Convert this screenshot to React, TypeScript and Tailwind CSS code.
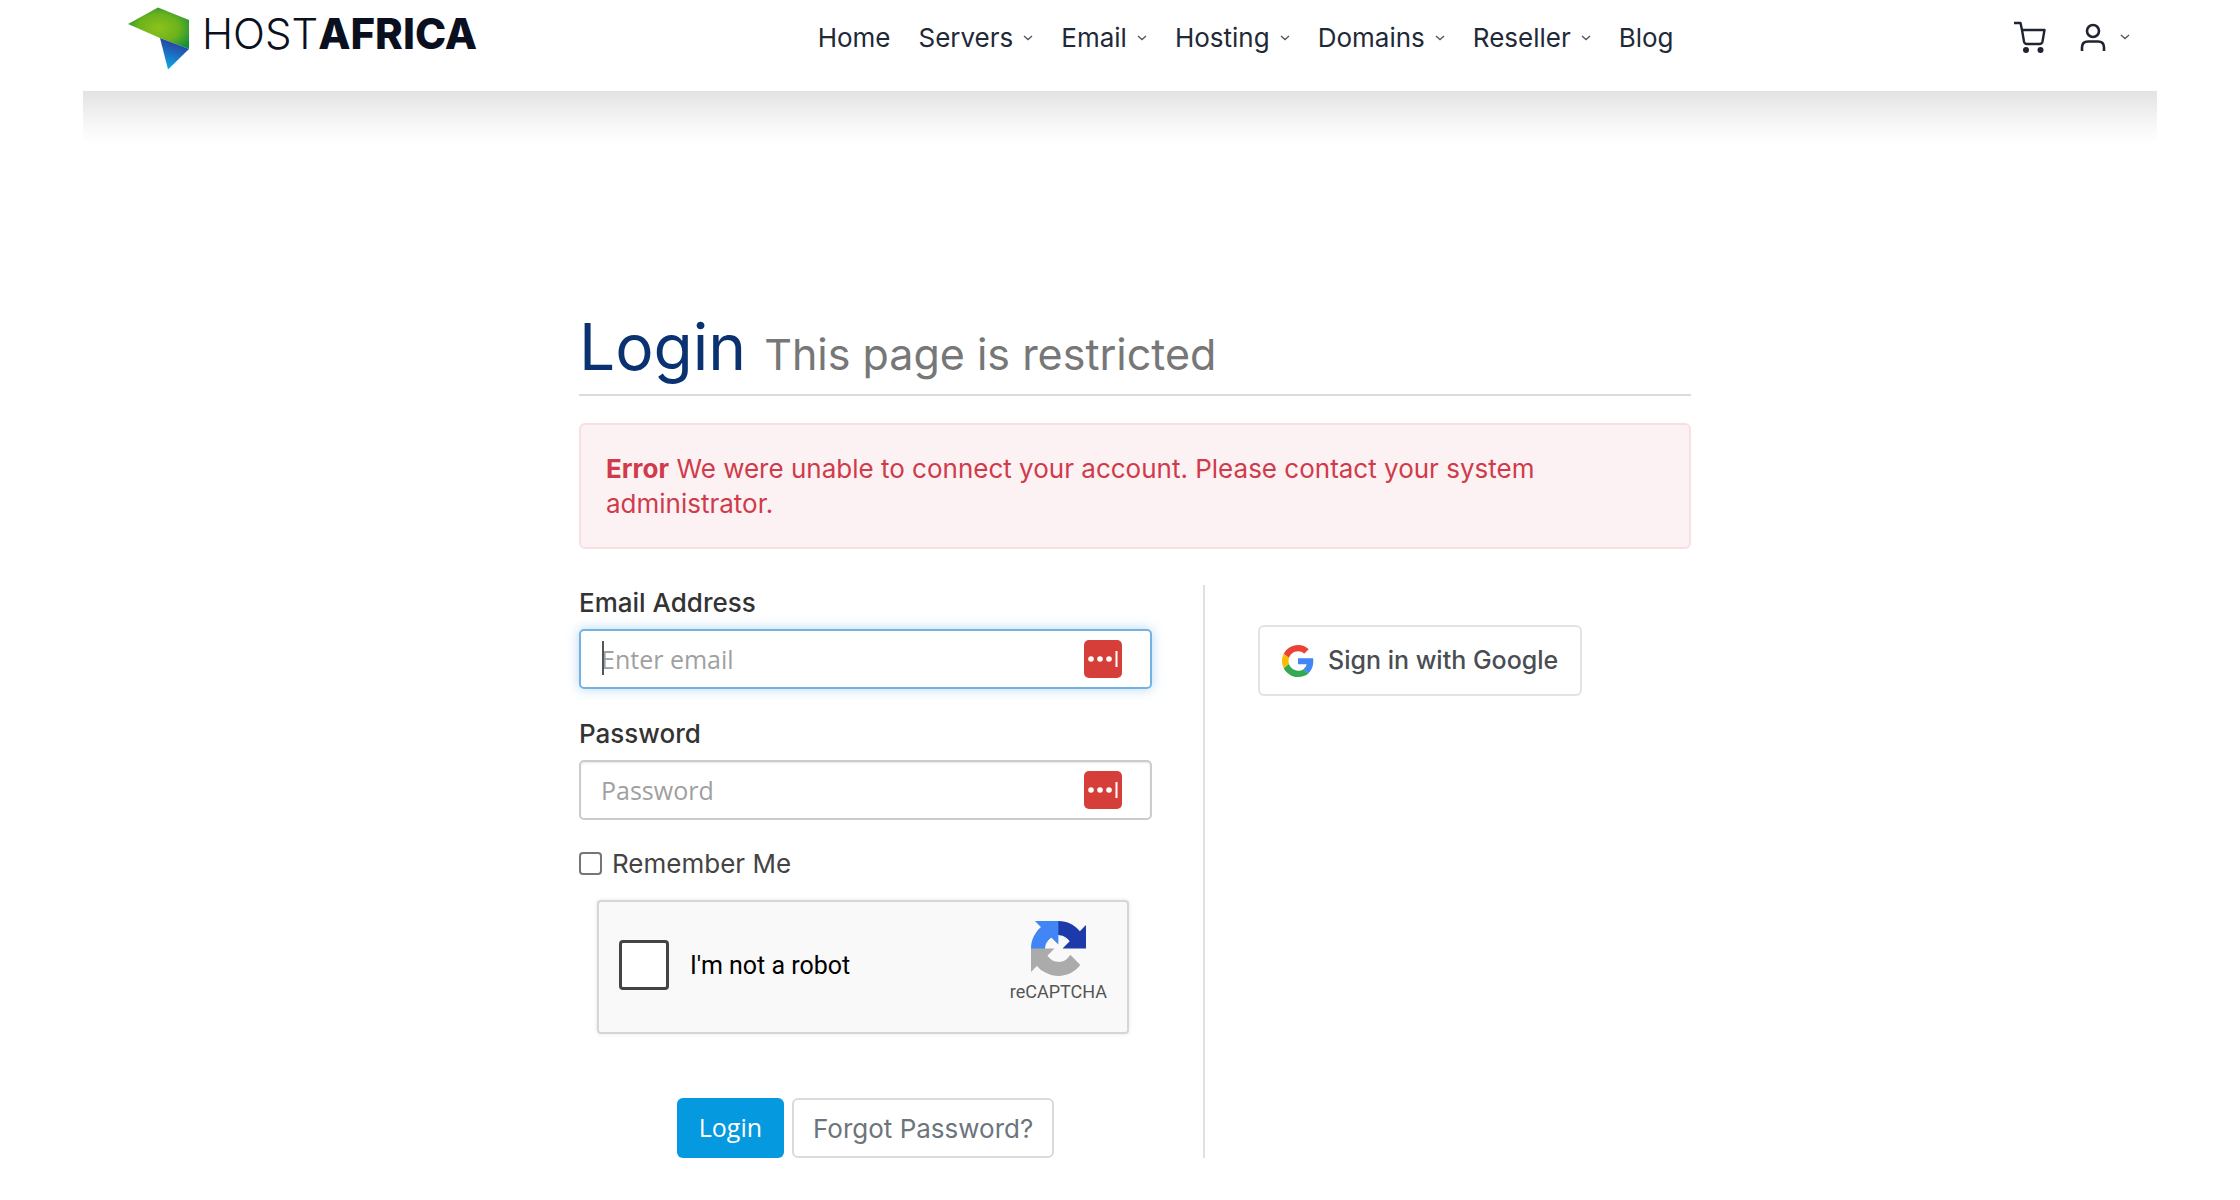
const navItems = [
   { label: "Home", hasMenu: false },
   { label: "Servers", hasMenu: true },
   { label: "Email", hasMenu: true },
   { label: "Hosting", hasMenu: true },
   { label: "Domains", hasMenu: true },
   { label: "Reseller", hasMenu: true },
   { label: "Blog", hasMenu: false },
];

const Chevron = () => (
   <svg width="10" height="6" viewBox="0 0 10 6" fill="none" aria-hidden="true">
      <path d="M1 1L5 4.6L9 1" stroke="#4b5563" strokeWidth="1.3" />
   </svg>
);

const Logo = () => (
   <a href="#" className="flex items-start gap-[13px] text-[#0b1020]">
      <svg width="61" height="63" viewBox="0 0 61 63" aria-hidden="true">
         <defs>
            <radialGradient id="green" cx="0.5" cy="0.5" r="0.6">
               <stop offset="0" stopColor="#8cc21a" />
               <stop offset="0.55" stopColor="#6db31c" />
               <stop offset="1" stopColor="#17903a" />
            </radialGradient>
            <linearGradient id="blue" x1="0.6" y1="0" x2="0.3" y2="1">
               <stop offset="0.1" stopColor="#27409a" />
               <stop offset="0.5" stopColor="#1d6cc0" />
               <stop offset="1" stopColor="#08aee8" />
            </linearGradient>
         </defs>
         <path d="M0 17L30 0.5L61 13V42L32 31Z" fill="url(#green)" />
         <path d="M32 31L61 42L40 62.5Z" fill="url(#blue)" />
      </svg>
      <span className="text-[42px] leading-[54px] font-light">
         HOST<span className="font-extrabold">AFRICA</span>
      </span>
   </a>
);

const Header = () => (
   <header className="flex h-[91px] items-start justify-between pt-[7px] pr-[110px] pl-[128px]">
      <Logo />
      <nav className="flex items-center gap-7 pt-[13px] text-[26px] leading-[35px] text-[#1f2937]">
         {navItems.map((item) => (
            <a key={item.label} href="#" className="flex items-center gap-[10px]">
               {item.label}
               {item.hasMenu && <Chevron />}
            </a>
         ))}
      </nav>
      <div className="flex items-center gap-[34px] pt-[13px]">
         <a href="#" aria-label="Cart">
            <svg width="32" height="34" viewBox="0 0 32 34" fill="none" aria-hidden="true">
               <path
                  d="M0 3H6.5L8 10M8 10H30.5L28.5 21.5Q28 24 25.5 24H13Q10.5 24 10 21.5Z"
                  stroke="#1f2430"
                  strokeWidth="2.4"
                  strokeLinejoin="round"
               />
               <circle cx="12" cy="30" r="3" fill="#1f2430" />
               <circle cx="26.5" cy="30" r="3" fill="#1f2430" />
            </svg>
         </a>
         <button type="button" aria-label="Account" className="flex items-center gap-[14px]">
            <svg width="26" height="34" viewBox="0 0 26 34" fill="none" aria-hidden="true">
               <circle cx="13" cy="11" r="6" stroke="#1f2430" strokeWidth="2.6" />
               <path
                  d="M2 31V27.5Q2 21.5 8 21.5H18Q24 21.5 24 27.5V31"
                  stroke="#1f2430"
                  strokeWidth="2.6"
               />
            </svg>
            <Chevron />
         </button>
      </div>
   </header>
);

// Badge that the password manager puts in each field
const FieldBadge = () => (
   <svg
      className="absolute top-[11px] right-[30px]"
      width="38"
      height="38"
      viewBox="0 0 38 38"
      aria-hidden="true"
   >
      <rect width="38" height="38" rx="5" fill="#d63e3a" />
      <circle cx="7" cy="19" r="2.8" fill="#fff" />
      <circle cx="16" cy="19" r="2.8" fill="#fff" />
      <circle cx="25" cy="19" r="2.8" fill="#fff" />
      <rect x="31.5" y="11" width="2" height="16" fill="#fff" />
   </svg>
);

const Recaptcha = () => (
   <div className="mt-[19px] mr-[23px] ml-[18px] flex h-[134px] items-center justify-between rounded-[4px] border-2 border-[#d6d6d6] bg-[#f9f9f9] px-5 pb-1 font-[Roboto,sans-serif] shadow-[0_0_4px_rgba(0,0,0,0.1)]">
      <div className="flex items-center gap-[21px]">
         <input
            id="robot"
            type="checkbox"
            className="size-[50px] appearance-none rounded-[4px] border-[3px] border-[#444] bg-white"
         />
         <label htmlFor="robot" className="text-[25px] leading-[35px] text-black">
            I'm not a robot
         </label>
      </div>
      <div className="flex flex-col items-center gap-[3px] pb-1">
         <svg width="55" height="55" viewBox="0 0 64 64" aria-hidden="true">
            <path
               d="M64 31.955l-.033-1.37V4.687l-7.16 7.16C50.948 4.674 42.033.093 32.05.093c-10.4 0-19.622 4.96-25.458 12.64l11.736 11.86a15.55 15.55 0 0 1 4.754-5.334c2.05-1.6 4.952-2.906 8.968-2.906.485 0 .86.057 1.135.163 4.976.393 9.288 3.14 11.828 7.124l-8.307 8.307L64 31.953"
               fill="#1c3aa9"
            />
            <path
               d="M31.862.094l-1.37.033H4.594l7.16 7.16C4.58 13.147 0 22.06 0 32.046c0 10.4 4.96 19.622 12.64 25.458L24.5 45.768a15.55 15.55 0 0 1-5.334-4.754c-1.6-2.05-2.906-4.952-2.906-8.968 0-.485.057-.86.163-1.135.393-4.976 3.14-9.288 7.124-11.828l8.307 8.307L31.86.095"
               fill="#4285f4"
            />
            <path
               d="M.001 32.045l.033 1.37v25.898l7.16-7.16c5.86 7.173 14.774 11.754 24.76 11.754 10.4 0 19.622-4.96 25.458-12.64l-11.736-11.86a15.55 15.55 0 0 1-4.754 5.334c-2.05 1.6-4.952 2.906-8.968 2.906-.485 0-.86-.057-1.135-.163-4.976-.393-9.288-3.14-11.828-7.124l8.307-8.307c-10.522.04-22.4.066-27.295-.005"
               fill="#ababab"
            />
         </svg>
         <span className="text-[18px] leading-[26px] text-[#555]">reCAPTCHA</span>
      </div>
   </div>
);

const LoginForm = () => (
   <form
      className="w-[626px] border-r-2 border-[#e0e0e0] pr-[51px]"
      onSubmit={(e) => e.preventDefault()}
   >
      <label htmlFor="email" className="block text-[26px] leading-[35px] font-medium text-[#333]">
         Email Address
      </label>
      <div className="relative mt-[9px] font-['Open_Sans',sans-serif]">
         <input
            id="email"
            type="email"
            placeholder="Enter email"
            className="block h-[60px] w-full rounded-[5px] border-2 border-[#74b2e2] px-5 text-[25px] shadow-[0_0_12px_rgba(102,175,233,0.5)] outline-none placeholder:text-[#a0a0a0]"
         />
         <span className="absolute top-3 left-[23px] h-[34px] w-[2px] bg-[#555]" />
         <FieldBadge />
      </div>
      <label
         htmlFor="password"
         className="mt-[27px] block text-[26px] leading-[35px] font-medium text-[#333]"
      >
         Password
      </label>
      <div className="relative mt-[9px] font-['Open_Sans',sans-serif]">
         <input
            id="password"
            type="password"
            placeholder="Password"
            className="block h-[60px] w-full rounded-[5px] border-2 border-[#ccc] px-5 text-[25px] shadow-[inset_0_1px_2px_rgba(0,0,0,0.1)] outline-none placeholder:text-[#a0a0a0]"
         />
         <FieldBadge />
      </div>
      <label className="mt-[26px] flex items-center gap-[10px] text-[26px] leading-[35px] text-[#444]">
         <input
            type="checkbox"
            className="size-[23px] appearance-none rounded-[4px] border-2 border-[#767676] bg-white"
         />
         Remember Me
      </label>
      <Recaptcha />
      <div className="mt-16 flex justify-center gap-2">
         <button
            type="submit"
            className="h-[60px] rounded-[6px] bg-[#0599e0] px-[22px] font-['Open_Sans',sans-serif] text-[25px] text-white"
         >
            Login
         </button>
         <a
            href="#"
            className="flex h-[60px] items-center rounded-[6px] border-2 border-[#d8dadb] px-[19px] text-[26px] text-[#6c757d]"
         >
            Forgot Password?
         </a>
      </div>
   </form>
);

const GoogleButton = () => (
   <button
      type="button"
      className="mt-10 ml-[53px] flex h-[71px] items-center gap-[14px] self-start rounded-[6px] border-2 border-[#e2e3e5] px-[22px] text-[25px] font-medium text-[#4a4d51]"
   >
      <svg width="32" height="32" viewBox="0 0 48 48" aria-hidden="true">
         <path
            fill="#EA4335"
            d="M24 9.5c3.54 0 6.71 1.22 9.21 3.6l6.85-6.85C35.9 2.38 30.47 0 24 0 14.62 0 6.51 5.38 2.56 13.22l7.98 6.19C12.43 13.72 17.74 9.5 24 9.5z"
         />
         <path
            fill="#4285F4"
            d="M46.98 24.55c0-1.57-.15-3.09-.38-4.55H24v9.02h12.94c-.58 2.96-2.26 5.48-4.78 7.18l7.73 6c4.51-4.18 7.09-10.36 7.09-17.65z"
         />
         <path
            fill="#FBBC05"
            d="M10.53 28.59c-.48-1.45-.76-2.99-.76-4.59s.27-3.14.76-4.59l-7.98-6.19C.92 16.46 0 20.12 0 24c0 3.88.92 7.54 2.56 10.78l7.97-6.19z"
         />
         <path
            fill="#34A853"
            d="M24 48c6.48 0 11.93-2.13 15.89-5.81l-7.73-6c-2.15 1.45-4.92 2.3-8.16 2.3-6.26 0-11.57-4.22-13.47-9.91l-7.98 6.19C6.51 42.62 14.62 48 24 48z"
         />
      </svg>
      Sign in with Google
   </button>
);

const App = () => {
   return (
      <div className="bg-white font-[Inter,sans-serif]">
         <Header />
         <div className="mx-[83px] h-[52px] bg-linear-to-b from-[#e2e2e2] via-[#f3f3f3] to-white" />
         <main className="pl-[30px]">
            <div className="mx-auto max-w-[1112px] pt-[169px] pb-[42px]">
               <h1 className="border-b-2 border-[#dcdcdc] pb-3 text-[64px] leading-[70px] text-[#0b3270]">
                  Login{" "}
                  <small className="text-[43px] leading-none text-[#777]">
                     This page is restricted
                  </small>
               </h1>
               <div
                  role="alert"
                  className="mt-[27px] rounded-[6px] border-2 border-[#f8dfe2] bg-[#fcf2f3] px-[25px] py-[26px] text-[26px] leading-[35px] text-[#d03b4b]"
               >
                  <strong>Error</strong> We were unable to connect your account. Please contact
                  your system administrator.
               </div>
               <div className="mt-9 flex items-stretch">
                  <LoginForm />
                  <GoogleButton />
               </div>
            </div>
         </main>
      </div>
   );
};

export default App;
